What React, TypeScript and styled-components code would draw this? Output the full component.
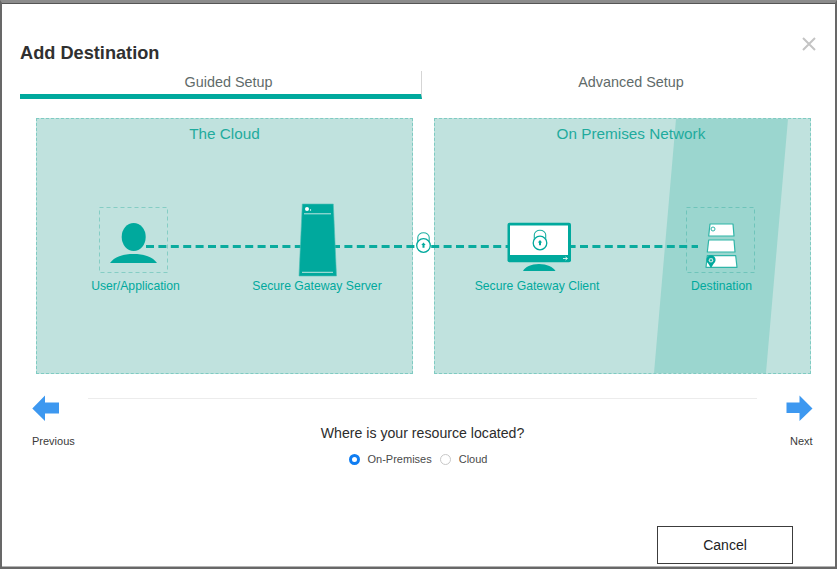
import React from "react";
import styled, { createGlobalStyle } from "styled-components";

const Global = createGlobalStyle`
  html, body { margin: 0; padding: 0; background: #fff; }
  body { font-family: "Liberation Sans", Arial, sans-serif; }
`;

const Frame = styled.div`
  width: 837px;
  height: 569px;
  box-sizing: border-box;
  background: #fff;
  border-style: solid;
  border-color: #686868;
  border-width: 3px 2px 2px 2px;
  border-top-color: #8c8c8c;
  box-shadow: inset 0 1px 0 #555, inset 0 -1px 0 #b4b4b4;
  display: flex;
  flex-direction: column;
  padding: 0 11px 0 18px;
`;

const Header = styled.header`
  height: 68px;
  display: flex;
  align-items: flex-start;
  justify-content: space-between;
  flex: none;
`;

const Title = styled.h1`
  margin: 38px 0 0;
  font-size: 18.2px;
  line-height: 24px;
  font-weight: 700;
  color: #303030;
`;

const Close = styled.button`
  margin: 33px 7px 0 0;
  padding: 0;
  width: 16px;
  height: 16px;
  border: 0;
  background: none;
  display: block;
`;

const Tabs = styled.div`
  display: flex;
  height: 28px;
  flex: none;
`;

const Tab = styled.div<{ $active?: boolean }>`
  width: 402px;
  box-sizing: border-box;
  padding: 2px 0 0 16px;
  text-align: center;
  font-size: 14.4px;
  line-height: 18px;
  color: #5f6b6a;
  border-bottom: 5px solid ${(p) => (p.$active ? "#00a99d" : "transparent")};
  border-right: ${(p) => (p.$active ? "1px solid #d5d5d5" : "0")};
`;

const Stage = styled.div`
  position: relative;
  margin: 19px 0 0 16px;
  width: 775px;
  height: 256px;
  display: flex;
  gap: 21px;
  flex: none;
`;

const Panel = styled.section<{ $width: number; $shift?: number }>`
  position: relative;
  overflow: hidden;
  flex: none;
  width: ${(p) => p.$width}px;
  box-sizing: border-box;
  background: #c0e2de;
  border: 1px dashed #7fcbc2;
  padding: 5px 0 0 ${(p) => p.$shift ?? 0}px;
  text-align: center;
  color: #1fab9d;
  font-size: 15.3px;
  line-height: 19px;
`;

const PanelTitle = styled.span`
  position: relative;
`;

const Beam = styled.div`
  position: absolute;
  top: 0;
  bottom: 0;
  left: 219px;
  width: 134px;
  background: #9bd6cf;
  clip-path: polygon(22px 0, 134px 0, 112px 100%, 0 100%);
`;

const Diagram = styled.svg`
  position: absolute;
  left: -36px;
  top: -118px;
  width: 838px;
  height: 570px;
  pointer-events: none;
`;

const NodeLabel = styled.span<{ $cx: number }>`
  position: absolute;
  top: 161px;
  left: ${(p) => p.$cx - 36}px;
  transform: translateX(-50%);
  white-space: nowrap;
  font-size: 12.2px;
  line-height: 15px;
  color: #00a99d;
`;

const Footer = styled.div`
  display: flex;
  margin-top: 21px;
  flex: none;
`;

const Nav = styled.div<{ $width: number; $gap: number }>`
  flex: none;
  width: ${(p) => p.$width}px;
  padding-left: ${(p) => p.$gap}px;
  box-sizing: border-box;
`;

const NavIcon = styled.svg`
  display: block;
`;

const NavLabel = styled.div<{ $left: number }>`
  margin: 12px 0 0 ${(p) => p.$left}px;
  font-size: 11px;
  line-height: 14px;
  color: #3a3a3a;
`;

const Center = styled.div`
  flex: none;
  width: 669px;
  padding-top: 3px;
  text-align: center;
`;

const Rule = styled.hr`
  margin: 0;
  border: 0;
  height: 1px;
  background: #ececec;
`;

const Question = styled.div`
  margin-top: 26px;
  font-size: 14.15px;
  line-height: 17px;
  color: #2c2c2c;
`;

const Radios = styled.div`
  display: flex;
  justify-content: center;
  align-items: center;
  gap: 8px;
  margin-top: 10px;
  padding-right: 9px;
  font-size: 11px;
  line-height: 14px;
  color: #4a4a4a;
`;

const RadioMark = styled.span<{ $on?: boolean }>`
  width: 11px;
  height: 11px;
  box-sizing: border-box;
  border-radius: 50%;
  background: #fff;
  border: ${(p) => (p.$on ? "3.5px solid #0f7df2" : "1px solid #c8c8c8")};
  flex: none;
`;

const Actions = styled.div`
  margin-top: auto;
  margin-bottom: 3px;
  display: flex;
  justify-content: flex-end;
  padding-right: 31px;
`;

const Cancel = styled.button`
  width: 136px;
  height: 38px;
  background: #fff;
  border: 1px solid #3c3c3c;
  font-family: inherit;
  font-size: 14px;
  color: #222;
  padding: 0;
`;

const Lock = ({ x, y }: { x: number; y: number }) => (
  <g>
    <path
      d={`M${x - 5.7} ${y - 3}v-5.200a5.700 4.500 0 0 1 11.400 0v5.200`}
      fill="none"
      stroke="#1fb0a3"
      strokeWidth="1.100"
    />
    <circle cx={x} cy={y} r="6.800" fill="#fff" stroke="#00a99d" strokeWidth="1.300" />
    <path d={`M${x} ${y - 3}l2.200 2.600h-1.200v2.600h-2v-2.600h-1.200z`} fill="#00a99d" />
  </g>
);

const DiagramArt = () => (
  <Diagram viewBox="0 0 838 570">
    <rect x="99.500" y="207.500" width="68" height="65" fill="none" stroke="#85cdc4" strokeDasharray="4 3" />
    <rect x="686.500" y="207.500" width="68" height="65" fill="none" stroke="#6fc4ba" strokeDasharray="4 3" />

    <path
      d="M146 246.500H698"
      fill="none"
      stroke="#0aab9e"
      strokeWidth="3"
      strokeDasharray="8 4.400"
    />

    <ellipse cx="133.700" cy="237" rx="12" ry="14" fill="#00a99d" />
    <path d="M110 263c4-6 13-9 23.500-9s19.500 3 23.500 9z" fill="#00a99d" />

    <path d="M302.300 204H333.300L336.500 276H299z" fill="#00a99d" stroke="#4fc0b5" strokeWidth=".6" />
    <path d="M304 213.800H331M302 272.300H333" stroke="#bfe6e1" strokeWidth="1" />
    <circle cx="307" cy="209" r="2" fill="#fff" />
    <circle cx="310.500" cy="210" r=".7" fill="#fff" />

    <Lock x={423.500} y={245.500} />

    <rect x="507.500" y="222.700" width="63.500" height="39.500" rx="2" fill="#00a99d" />
    <rect x="510" y="225.500" width="58" height="29.500" fill="#fff" />
    <path d="M523 271c2-4 8-7 16-7s14 3 16.500 7z" fill="#00a99d" />
    <path d="M563 258.500h4M565.500 257l2 1.500-2 1.500" fill="none" stroke="#fff" strokeWidth=".8" />
    <Lock x={540} y={243} />

    <g fill="#fff" stroke="#2fb5a8" strokeWidth="1.200" strokeLinejoin="round">
      <path d="M710 224H733L734 236H708.700z" />
      <path d="M708.700 240H734L735 252H707.300z" />
      <path d="M707.300 255.700H735.700L737 267.300H706z" />
    </g>
    <circle cx="713" cy="229" r="2" fill="none" stroke="#2fb5a8" strokeWidth="1" />
    <path d="M711 268l-2.800-4.400a4.600 4.600 0 1 1 5.600 0z" fill="#00a99d" />
    <circle cx="711" cy="260.300" r="2.300" fill="#c0e2de" />
    <circle cx="711" cy="260.300" r="1" fill="#00a99d" />
  </Diagram>
);

export default function App() {
  return (
    <>
      <Global />
      <Frame>
        <Header>
          <Title>Add Destination</Title>
          <Close aria-label="Close">
            <svg width="16" height="16" viewBox="0 0 16 16">
              <path d="M2 2L14 14M14 2L2 14" stroke="#c4c4c4" strokeWidth="2" fill="none" />
            </svg>
          </Close>
        </Header>
        <Tabs>
          <Tab $active>Guided Setup</Tab>
          <Tab>Advanced Setup</Tab>
        </Tabs>
        <Stage>
          <Panel $width={377}>
            <PanelTitle>The Cloud</PanelTitle>
          </Panel>
          <Panel $width={377} $shift={17}>
            <Beam />
            <PanelTitle>On Premises Network</PanelTitle>
          </Panel>
          <DiagramArt />
          <NodeLabel $cx={135.500}>User/Application</NodeLabel>
          <NodeLabel $cx={317}>Secure Gateway Server</NodeLabel>
          <NodeLabel $cx={537}>Secure Gateway Client</NodeLabel>
          <NodeLabel $cx={721.500}>Destination</NodeLabel>
        </Stage>
        <Footer>
          <Nav $width={68} $gap={12}>
            <NavIcon width="28" height="27" viewBox="0 0 28 27">
              <path d="M0.300 13.500L13 0.500V7.500H27V18.500H13V26z" fill="#3d98f0" />
            </NavIcon>
            <NavLabel $left={0}>Previous</NavLabel>
          </Nav>
          <Center>
            <Rule />
            <Question>Where is your resource located?</Question>
            <Radios>
              <RadioMark $on />
              <span>On-Premises</span>
              <RadioMark />
              <span>Cloud</span>
            </Radios>
          </Center>
          <Nav $width={60} $gap={29}>
            <NavIcon width="28" height="27" viewBox="0 0 28 27">
              <path d="M26.500 13.500L13.500 0.500V7.500H0.500V18H13.500V26z" fill="#3d98f0" />
            </NavIcon>
            <NavLabel $left={4}>Next</NavLabel>
          </Nav>
        </Footer>
        <Actions>
          <Cancel>Cancel</Cancel>
        </Actions>
      </Frame>
    </>
  );
}
